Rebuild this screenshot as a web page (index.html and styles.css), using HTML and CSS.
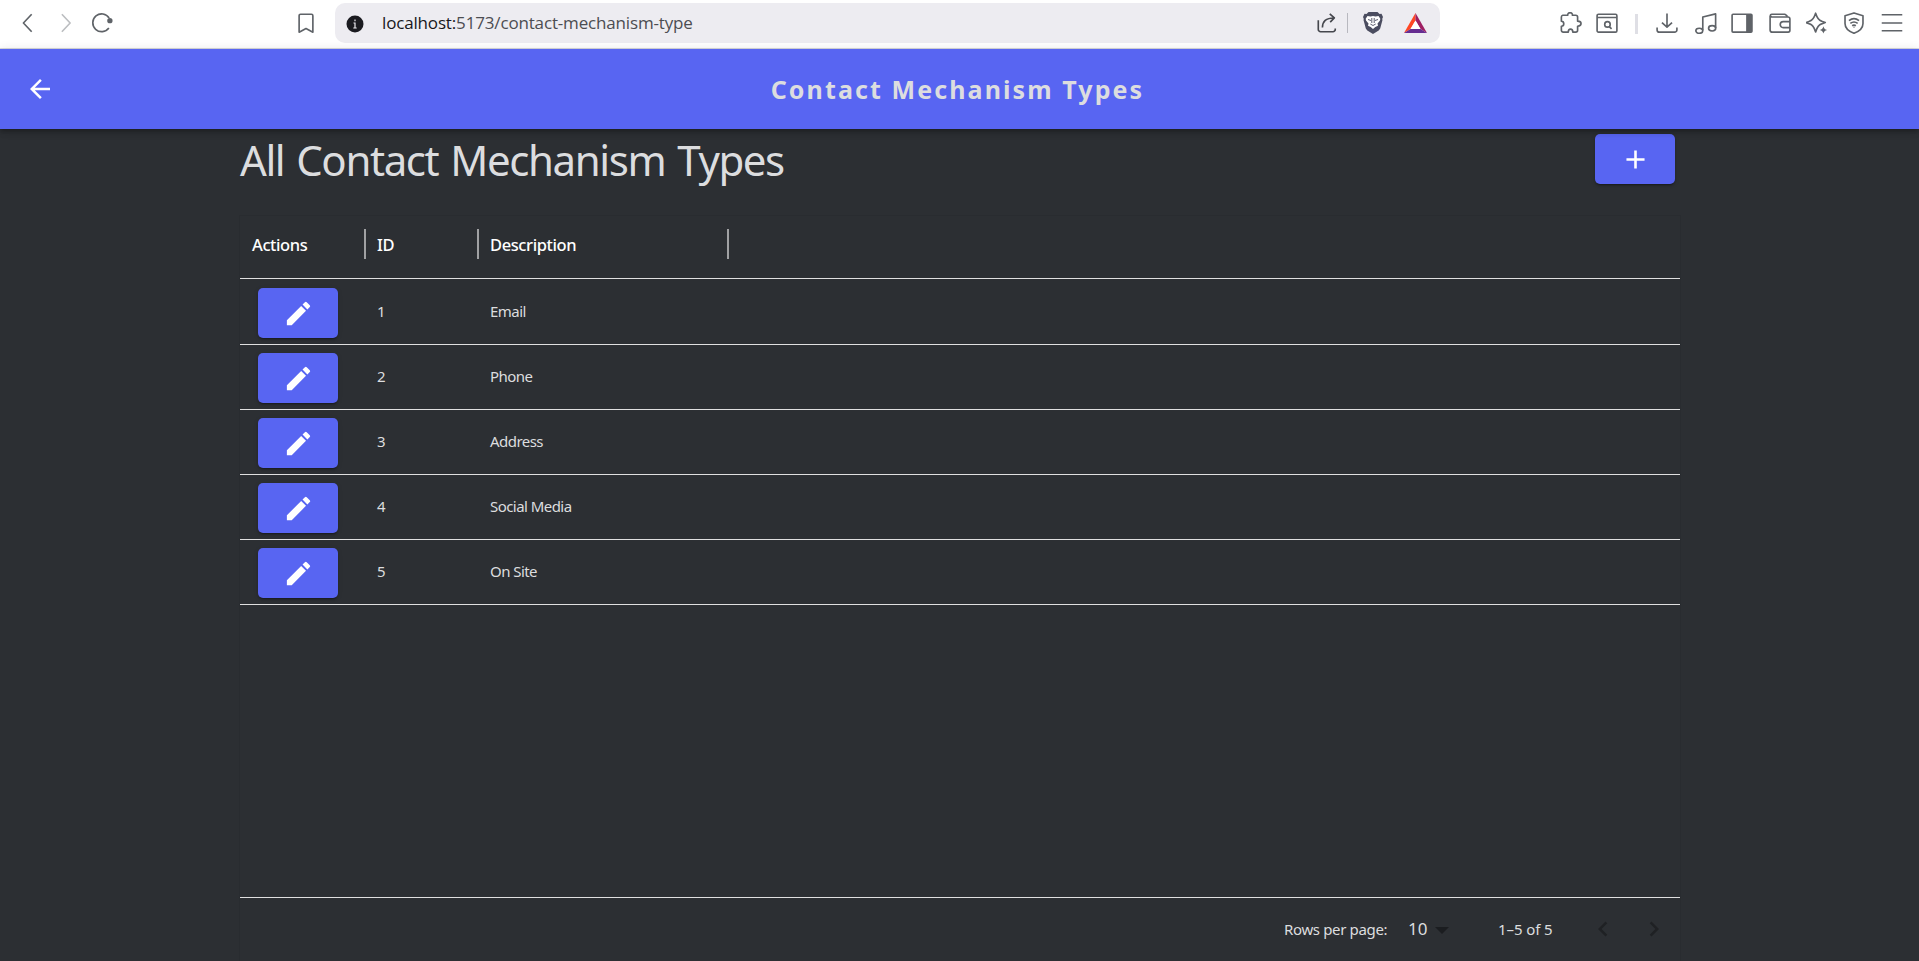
FILE: index.html
```html
<!DOCTYPE html>
<html lang="en">
<head>
<meta charset="utf-8">
<title>Contact Mechanism Types</title>
<link rel="stylesheet" href="styles.css">
</head>
<body>
<svg class="defs" aria-hidden="true">
  <symbol id="edit" viewBox="0 0 24 24"><path d="M3 17.25V21h3.75L17.81 9.94l-3.75-3.75L3 17.25zM20.71 7.04a1 1 0 0 0 0-1.41l-2.34-2.34a1 1 0 0 0-1.41 0l-1.83 1.83 3.75 3.75 1.83-1.83z"/></symbol>
</svg>
<div class="browser">
  <div class="nav">
    <svg class="ico back" viewBox="0 0 24 24"><path d="M16 2.500 7 12l9 9.500"/></svg>
    <svg class="ico fwd" viewBox="0 0 24 24"><path d="M7.500 2.500 16.500 12l-9 9.500"/></svg>
    <svg class="ico reload" viewBox="0 0 24 24"><path d="M19.500 17.500A9.700 9.700 0 1 1 19.800 6.500"/><circle class="solid" cx="20.600" cy="9.500" r="2.900"/></svg>
  </div>
  <svg class="ico mark" viewBox="0 0 24 24"><path d="M6 2.500h12a1.500 1.500 0 0 1 1.500 1.500V22L12 18l-7.500 4V4A1.500 1.500 0 0 1 6 2.500z"/></svg>
  <div class="address">
    <svg class="info" viewBox="0 0 18 18"><circle cx="9" cy="9" r="8.500"/><path d="M9 4.500v1.800M9 7.500V13.500M7.500 8H9M7.300 13h3.400"/></svg>
    <div class="url"><span class="host">localhost:</span>5173/contact-mechanism-type</div>
    <svg class="ico share" viewBox="0 0 24 24"><path d="M2.500 9v10a2.500 2.500 0 0 0 2.500 2.500h13.500a2.500 2.500 0 0 0 2.500-2.500v-1M7 17c0-7 4-10.500 12.500-10.500M15 2l5 4.500-4.500 4.500"/></svg>
    <span class="bar"></span>
    <svg class="brave" viewBox="0 0 20 22"><path class="b1" d="M5.500 0h9l2 2 2-.2L20 5l-.8 2 .3 1-2.300 8.500-1.500 2L10 22l-5.700-3.500-1.500-2L.5 8l.3-1L0 5l1.500-3.200 2 .2z"/><path class="b2" d="M4.500 4 7.500 4.500l2.500-.5 2.500.5 3-.5 1.800 2.800-.3 1.700-2.500 3 .5 2.200-2.700 1.300L10 17l-2.300-2-2.700-1.300.5-2.200L3 8.500l-.3-1.700z"/><path class="b3" d="M5 7.500 8 8.500M15 7.500 12 8.500M8.800 6v5M11.200 6v5M7.300 12l2.700 1.500 2.700-1.500"/></svg>
    <svg class="bat" viewBox="0 0 23 20"><path fill="#ff4724" d="M11.500 0v7.500L6.500 16 0 20z"/><path fill="#9e1f63" d="M11.500 0 23 20l-6.500-4-5-8.500z"/><path fill="#662d91" d="M0 20h23l-6.500-4h-10z"/><path fill="#fff" d="m11.500 7.500 5 8.500h-10z"/></svg>
  </div>
  <div class="tools">
    <svg class="ico" viewBox="0 0 24 24"><path d="M3 3.500H8.500c-.3-2 1-2.700 2.500-2.700s2.800.7 2.500 2.700h3.700a2 2 0 0 1 2 2V10c5 0 5 5 0 5.500V20a2 2 0 0 1-2 2H14c0-4.500-5-4.500-5 0H3.500a2 2 0 0 1-2-2v-4.500c3.500 0 3.500-5 0-5.500V5.500a2 2 0 0 1 1.500-2z"/></svg>
    <svg class="ico t2" viewBox="0 0 24 24"><rect x="1.200" y="2.500" width="21.600" height="19.500" rx="1.500"/><path d="M1.500 6h21M14.500 16l2.500 2.500"/><circle cx="12.500" cy="13.500" r="3"/></svg>
    <span class="bar light"></span>
    <svg class="ico t3" viewBox="0 0 24 24"><path d="M12 1.500v15M6.500 11.500l5.500 5 5.500-5M1.200 17v2.500A2.500 2.500 0 0 0 3.700 22h16.600a2.500 2.500 0 0 0 2.500-2.500V17"/></svg>
    <svg class="ico t4" viewBox="0 0 24 24"><path d="M8.500 20V5.500l14-3.500v15.500"/><ellipse cx="4.700" cy="20.500" rx="3.800" ry="2.800"/><ellipse cx="18.700" cy="17.800" rx="3.900" ry="2.900"/></svg>
    <svg class="ico t5" viewBox="0 0 24 24"><rect x="1.200" y="2.500" width="21.600" height="19.500" rx="1"/><path class="solid" d="M16.500 2.500h6.500v19.500h-6.500z"/></svg>
    <svg class="ico t6" viewBox="0 0 24 24"><path d="M22.800 13.500V7.500a2 2 0 0 0-2-2H3.500a2 2 0 0 1-2-1.500c0-1 .7-1.500 1.500-1.500h14.500l2 1.500v1.500M1.200 4v15.500A2.500 2.500 0 0 0 3.700 22h17.100a2 2 0 0 0 2-2v-3M22.800 10.500H15.500a3 3 0 0 0 0 6.500h7.300z"/></svg>
    <svg class="ico t7" viewBox="0 0 24 24"><path d="M10.500 1.300C12 6 13.500 9 17 10l4 1.500-4 1.500c-3.500 1-5 4-6.500 8.700C9 17 7.500 14 4 13L0 11.500 4 10c3.500-1 5-4 6.500-8.700z"/><path class="solid" d="M19 15.500c.7 2.500 1.500 3.300 4 4-2.500.7-3.300 1.500-4 4-.7-2.500-1.500-3.300-4-4 2.500-.7 3.300-1.500 4-4z"/></svg>
    <svg class="ico t8" viewBox="0 0 24 24"><path d="M12 1 21.800 4v8.500c0 5-4.500 8.700-9.800 10.700-5.300-2-9.800-5.700-9.800-10.700V4zM6.500 9.500c3.500-3 7.500-3 11 0M8 12.500c2.500-2 5.500-2 8 0M10 15c1.500-1 2.500-1 4 0"/><circle class="solid" cx="12" cy="16.500" r=".7"/></svg>
    <svg class="ico t9" viewBox="0 0 24 24"><path d="M.8 3h22.400M.8 12h22.400M.8 20.500h22.400"/></svg>
  </div>
</div>
<header class="appbar">
  <svg class="arrow" viewBox="0 0 24 24"><path d="M20 11H7.830l5.590-5.590L12 4l-8 8 8 8 1.410-1.410L7.830 13H20z"/></svg>
  <h1 class="title">Contact Mechanism Types</h1>
</header>
<main class="page">
  <div class="heading">
    <h2 class="caption">All Contact Mechanism Types</h2>
    <button class="btn add"><svg class="glyph" viewBox="0 0 24 24"><path d="M19 13h-6v6h-2v-6H5v-2h6V5h2v6h6z"/></svg></button>
  </div>
  <section class="grid">
    <div class="row head"><div class="th">Actions</div><div class="th">ID</div><div class="th wide">Description</div></div>
    <div class="row"><div class="act"><button class="btn"><svg class="glyph"><use href="#edit"/></svg></button></div><div class="td">1</div><div class="td">Email</div></div>
    <div class="row"><div class="act"><button class="btn"><svg class="glyph"><use href="#edit"/></svg></button></div><div class="td">2</div><div class="td">Phone</div></div>
    <div class="row"><div class="act"><button class="btn"><svg class="glyph"><use href="#edit"/></svg></button></div><div class="td">3</div><div class="td">Address</div></div>
    <div class="row"><div class="act"><button class="btn"><svg class="glyph"><use href="#edit"/></svg></button></div><div class="td">4</div><div class="td">Social Media</div></div>
    <div class="row"><div class="act"><button class="btn"><svg class="glyph"><use href="#edit"/></svg></button></div><div class="td">5</div><div class="td">On Site</div></div>
    <footer class="pager">
      <span class="label">Rows per page:</span>
      <span class="size">10</span>
      <svg class="drop" viewBox="0 0 14 7"><path d="M0 0h14L7 7z"/></svg>
      <span class="range">1–5 of 5</span>
      <svg class="chev" viewBox="0 0 24 24"><path d="M15.410 7.410 14 6l-6 6 6 6 1.410-1.410L10.830 12z"/></svg>
      <svg class="chev" viewBox="0 0 24 24"><path d="M10 6 8.590 7.410 13.170 12l-4.580 4.590L10 18l6-6z"/></svg>
    </footer>
  </section>
</main>
</body>
</html>
```
FILE: styles.css
```css
* { box-sizing: border-box; }
body {
  margin: 0;
  height: 961px;
  overflow: hidden;
  display: flex;
  flex-direction: column;
  background: #2c2f33;
  color: #dcdddf;
  font-family: "Noto Sans", sans-serif;
}
.defs { display: none; }
svg { flex: none; }

.browser {
  height: 49px;
  flex: none;
  display: flex;
  background: #fff;
  border-bottom: 1px solid #d9dade;
  padding-top: 3px;
}
.ico { width: 22px; height: 22px; margin-top: 9px; fill: none; stroke: #5f6368; stroke-width: 1.8; stroke-linejoin: round; }
.solid { fill: #5f6368; stroke: none; }
.nav { width: 298px; display: flex; gap: 16px; padding-left: 17px; }
.nav .fwd { stroke: #bcbec1; }
.nav .reload { margin-left: -2px; }
.mark { margin-right: 18px; margin-left: -3px; }
.address {
  width: 1105px;
  height: 40px;
  border-radius: 10px;
  background: #edecf1;
  display: flex;
  align-items: center;
  padding-left: 11px;
}
.address .ico { margin-top: 0; stroke: #45474d; }
.info { width: 18px; height: 18px; margin-top: 2px; fill: #1b1b20; stroke: #edecf1; stroke-width: 1.200; }
.info circle { stroke: none; }
.url { margin-left: 18px; width: 934px; font: 17px/40px "Open Sans", sans-serif; letter-spacing: -.16px; color: #4c4d52; }
.host { color: #17171b; }
.bar { width: 1px; height: 20px; background: #b8b8bf; margin-left: 9px; }
.brave { width: 20px; height: 22px; margin-left: 15px; }
.b1 { fill: #4b4d60; }
.b2 { fill: #fff; }
.b3 { fill: none; stroke: #4b4d60; stroke-width: .9; }
.bat { width: 23px; height: 20px; margin-left: 21px; }
.tools { display: flex; margin-left: 120px; }
.light { width: 3px; background: #dfdfe5; margin: 11px 0 0 17px; }
.t2 { margin-left: 14px; }
.t3 { margin-left: 18px; }
.t4 { margin-left: 17px; }
.t5 { margin-left: 14px; }
.t6 { margin-left: 16px; }
.t7, .t8 { margin-left: 15px; }
.t9 { margin-left: 16px; }

.appbar {
  height: 80px;
  flex: none;
  display: flex;
  align-items: center;
  background: #5865f2;
  position: relative;
  box-shadow: 0 2px 4px -1px rgba(0,0,0,.2), 0 4px 5px rgba(0,0,0,.14), 0 1px 10px rgba(0,0,0,.12);
}
.arrow { width: 30px; height: 30px; margin-left: 25px; fill: #fff; }
.title { flex: 1; margin: 0 59px 0 0; text-align: center; font-size: 25px; font-weight: 700; letter-spacing: 2.1px; line-height: 80px; }

.page { width: 1440px; margin: 0 0 0 240px; flex: 1; display: flex; flex-direction: column; }
.heading { height: 87px; display: flex; justify-content: space-between; padding: 5px 5px 0 0; }
.caption { margin: 0; font-size: 42px; line-height: 52px; font-weight: 400; letter-spacing: -1.4px; word-spacing: 2.4px; }
.btn {
  width: 80px;
  height: 50px;
  padding: 0;
  border: 0;
  border-radius: 5px;
  background: #5865f2;
  display: flex;
  align-items: center;
  justify-content: center;
  box-shadow: 0 3px 1px -2px rgba(0,0,0,.2), 0 2px 2px rgba(0,0,0,.14), 0 1px 5px rgba(0,0,0,.12);
}
.glyph { width: 31px; height: 31px; fill: #fff; }

.grid { flex: 1; display: flex; flex-direction: column; box-shadow: 0 0 0 1px #292c30; }
.row { height: 65px; flex: none; display: grid; grid-template-columns: 126px 113px 250px; border-bottom: 1px solid #e0e0e0; }
.head { height: 63px; margin-bottom: 1px; }
.th {
  height: 30px;
  margin-top: 13px;
  padding-left: 12px;
  font-size: 16.5px;
  font-weight: 500;
  line-height: 31px;
  letter-spacing: -.4px;
  color: #fff;
  border-right: 2px solid #a0a1a3;
}
.th + .th { padding-left: 11px; }
.act { padding: 8px 0 0 18px; }
.td { padding-left: 11px; font-size: 15px; line-height: 62px; letter-spacing: -.55px; }
.pager {
  margin-top: auto;
  height: 64px;
  padding-bottom: 1px;
  border-top: 1px solid #e0e0e0;
  display: flex;
  align-items: center;
  font-size: 15px;
  line-height: 20px;
  letter-spacing: -.3px;
}
.label { margin-left: 1044px; width: 124px; letter-spacing: -.35px; }
.size { width: 27px; font-size: 17px; letter-spacing: 0; }
.drop { width: 14px; height: 7px; margin-top: 2px; fill: #1b1d20; }
.range { width: 90px; margin-left: 49px; letter-spacing: -.1px; }
.chev { width: 30px; height: 30px; fill: #1f2124; }
.chev + .chev { margin-left: 21px; }
```
